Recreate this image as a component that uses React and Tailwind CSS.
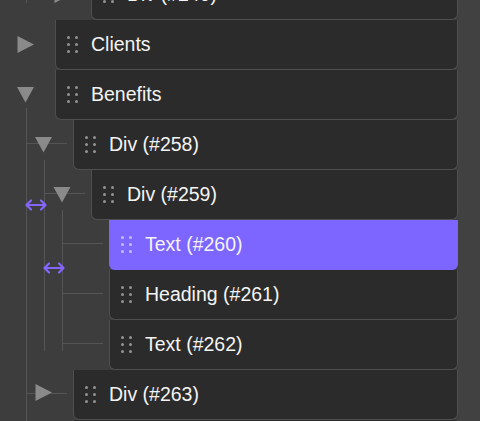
import React from 'react';

const rows = [
    { id: 'r240', label: 'Div (#240)', indent: 'ml-[91px]' },
    { id: 'clients', label: 'Clients', indent: 'ml-[55px]' },
    { id: 'benefits', label: 'Benefits', indent: 'ml-[55px]' },
    { id: 'r258', label: 'Div (#258)', indent: 'ml-[73px]' },
    { id: 'r259', label: 'Div (#259)', indent: 'ml-[91px]' },
    { id: 'r260', label: 'Text (#260)', indent: 'ml-[109px]', active: true },
    { id: 'r261', label: 'Heading (#261)', indent: 'ml-[109px]' },
    { id: 'r262', label: 'Text (#262)', indent: 'ml-[109px]' },
    { id: 'r263', label: 'Div (#263)', indent: 'ml-[73px]' },
    { id: 'next', label: '', indent: 'ml-[73px]' },
];

function Handle({ active }) {
    const dot = active ? 'bg-[#c6bbff]' : 'bg-[#939393]';
    return (
        <div className="grid grid-cols-2 gap-x-[4.5px] gap-y-[3.7px]">
            {[0, 1, 2, 3, 4, 5].map((i) => (
                <span key={i} className={`block h-[3px] w-[3px] rounded-full ${dot}`} />
            ))}
        </div>
    );
}

function Row({ label, indent, active }) {
    return (
        <div className={`flex h-[50px] ${indent}`}>
            <div
                className={
                    active
                        ? 'flex flex-1 items-center rounded-b-[6px] border-x border-b border-[#7d66ff] bg-[#7d66ff] pl-[11px]'
                        : 'flex flex-1 items-center rounded-b-[6px] border-x border-b border-[#4f4f4f] bg-[#2b2b2b] pl-[11px]'
                }
            >
                {label && <Handle active={active} />}
                {label && <span className="ml-[13.5px] text-[19.5px] leading-none text-[#f4f4f4]">{label}</span>}
            </div>
        </div>
    );
}

function TreeLines() {
    const line = '#555555';
    const tri = '#8a8a8a';
    const purple = '#8466ff';
    const right = (cx, cy) => `${cx - 7.5},${cy - 8.5} ${cx + 9},${cy} ${cx - 7.5},${cy + 8.5}`;
    const down = (cx, cy) => `${cx - 8.5},${cy - 7.5} ${cx + 8.5},${cy - 7.5} ${cx},${cy + 8}`;
    const arrow = (x1, x2, y) => (
        <g stroke={purple} strokeWidth="2.2" fill="none" strokeLinecap="round" strokeLinejoin="round">
            <line x1={x1 + 1} y1={y} x2={x2 - 1} y2={y} />
            <polyline points={`${x1 + 5},${y - 4.5} ${x1 + 0.5},${y} ${x1 + 5},${y + 4.5}`} />
            <polyline points={`${x2 - 5},${y - 4.5} ${x2 - 0.5},${y} ${x2 - 5},${y + 4.5}`} />
        </g>
    );
    return (
        <svg className="absolute left-0 top-0" width="110" height="421" viewBox="0 0 110 421">
            <g stroke={line} strokeWidth="1">
                <line x1="26.5" y1="0" x2="26.5" y2="3" />
                <line x1="26.5" y1="108" x2="26.5" y2="421" />
                <line x1="27" y1="143.5" x2="67" y2="143.5" />
                <line x1="44.5" y1="160" x2="44.5" y2="351" />
                <line x1="45" y1="193.5" x2="85" y2="193.5" />
                <line x1="62.5" y1="210" x2="62.5" y2="351" />
                <line x1="63" y1="243.5" x2="103" y2="243.5" />
                <line x1="63" y1="293.5" x2="103" y2="293.5" />
                <line x1="63" y1="343.5" x2="103" y2="343.5" />
                <line x1="27" y1="393.5" x2="67" y2="393.5" />
            </g>
            <g fill={tri}>
                <polygon points={right(62, -5.5)} />
                <polygon points={right(25, 44.5)} />
                <polygon points={down(25.5, 94.5)} />
                <polygon points={down(43.5, 144.5)} />
                <polygon points={down(62, 194.5)} />
                <polygon points={right(43, 392.5)} />
            </g>
            {arrow(26, 46, 205)}
            {arrow(44, 64, 268)}
        </svg>
    );
}

export default function App() {
    return (
        <div className="flex h-[421px] w-[480px] overflow-hidden bg-[#3d3d3d] font-['Liberation_Sans',Arial,sans-serif]">
            <div className="relative w-[458px]">
                <div className="-mt-[30px] flex flex-col">
                    {rows.map((r) => (
                        <Row key={r.id} {...r} />
                    ))}
                </div>
                <TreeLines />
            </div>
            <div className="flex-1 bg-[#414141]" />
        </div>
    );
}
